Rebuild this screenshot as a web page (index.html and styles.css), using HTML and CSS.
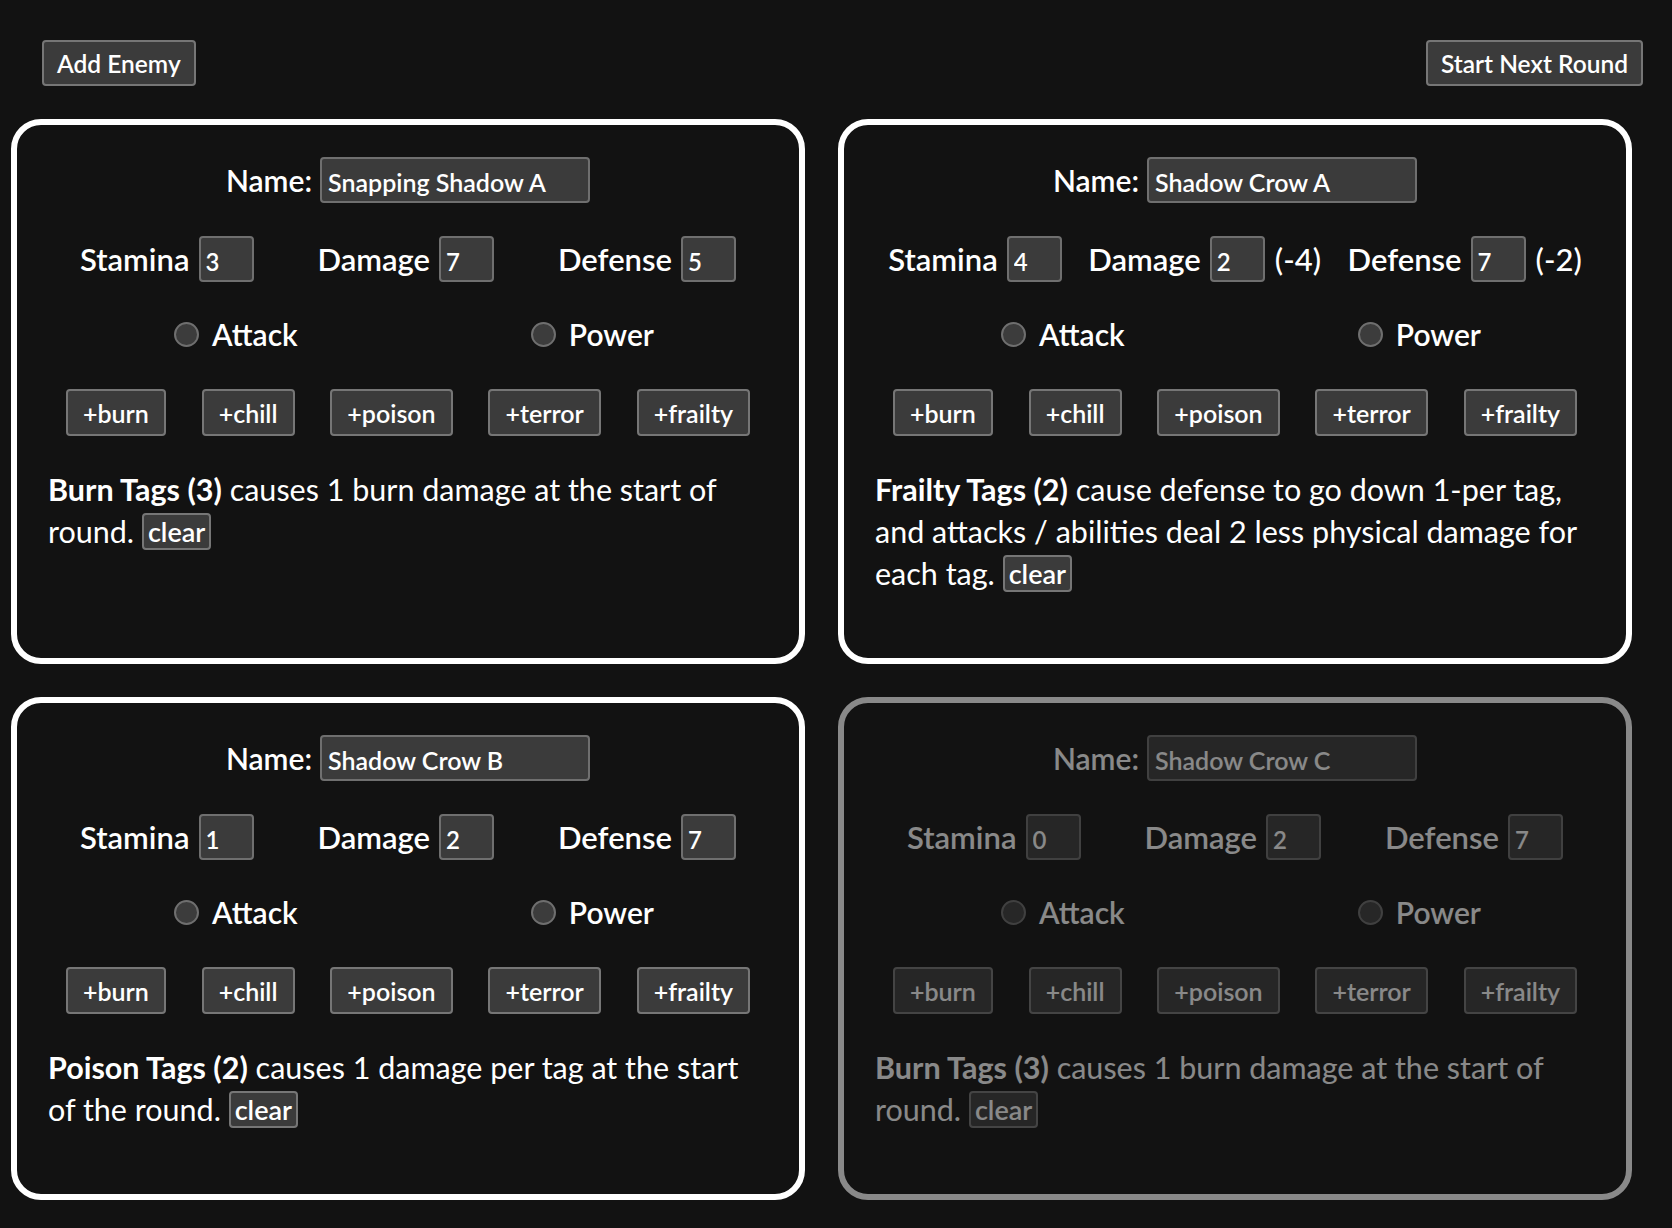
FILE: index.html
```html
<!DOCTYPE html>
<html lang="en">
<head>
<meta charset="utf-8">
<title>Enemy Tracker</title>
<link rel="stylesheet" href="styles.css">
</head>
<body>
<header class="toolbar">
  <button class="btn btn-main">Add Enemy</button>
  <button class="btn btn-main">Start Next Round</button>
</header>
<main class="grid">
  <section class="card">
    <div class="row name-row"><label class="lbl">Name:</label><input class="name-input" type="text" value="Snapping Shadow A"></div>
    <div class="row stats-row">
      <div class="stat"><span class="lbl">Stamina</span><input class="num" type="text" value="3"></div>
      <div class="stat"><span class="lbl">Damage</span><input class="num" type="text" value="7"></div>
      <div class="stat"><span class="lbl">Defense</span><input class="num" type="text" value="5"></div>
    </div>
    <div class="row radio-row">
      <label class="choice"><input type="radio" name="a1"><span class="lbl">Attack</span></label>
      <label class="choice"><input type="radio" name="a1"><span class="lbl">Power</span></label>
    </div>
    <div class="row tags-row">
      <button class="btn tag">+burn</button><button class="btn tag">+chill</button><button class="btn tag">+poison</button><button class="btn tag">+terror</button><button class="btn tag">+frailty</button>
    </div>
    <p class="desc"><b>Burn Tags (3)</b> causes 1 burn damage at the start of round. <button class="btn clear">clear</button></p>
  </section>

  <section class="card">
    <div class="row name-row"><label class="lbl">Name:</label><input class="name-input" type="text" value="Shadow Crow A"></div>
    <div class="row stats-row">
      <div class="stat"><span class="lbl">Stamina</span><input class="num" type="text" value="4"></div>
      <div class="stat"><span class="lbl">Damage</span><input class="num" type="text" value="2"><span class="lbl mod">(-4)</span></div>
      <div class="stat"><span class="lbl">Defense</span><input class="num" type="text" value="7"><span class="lbl mod">(-2)</span></div>
    </div>
    <div class="row radio-row">
      <label class="choice"><input type="radio" name="a2"><span class="lbl">Attack</span></label>
      <label class="choice"><input type="radio" name="a2"><span class="lbl">Power</span></label>
    </div>
    <div class="row tags-row">
      <button class="btn tag">+burn</button><button class="btn tag">+chill</button><button class="btn tag">+poison</button><button class="btn tag">+terror</button><button class="btn tag">+frailty</button>
    </div>
    <p class="desc"><b>Frailty Tags (2)</b> cause defense to go down 1-per tag, and attacks / abilities deal 2 less physical damage for each tag. <button class="btn clear">clear</button></p>
  </section>

  <section class="card">
    <div class="row name-row"><label class="lbl">Name:</label><input class="name-input" type="text" value="Shadow Crow B"></div>
    <div class="row stats-row">
      <div class="stat"><span class="lbl">Stamina</span><input class="num" type="text" value="1"></div>
      <div class="stat"><span class="lbl">Damage</span><input class="num" type="text" value="2"></div>
      <div class="stat"><span class="lbl">Defense</span><input class="num" type="text" value="7"></div>
    </div>
    <div class="row radio-row">
      <label class="choice"><input type="radio" name="a3"><span class="lbl">Attack</span></label>
      <label class="choice"><input type="radio" name="a3"><span class="lbl">Power</span></label>
    </div>
    <div class="row tags-row">
      <button class="btn tag">+burn</button><button class="btn tag">+chill</button><button class="btn tag">+poison</button><button class="btn tag">+terror</button><button class="btn tag">+frailty</button>
    </div>
    <p class="desc"><b>Poison Tags (2)</b> causes 1 damage per tag at the start of the round. <button class="btn clear">clear</button></p>
  </section>

  <section class="card card-dead">
    <div class="row name-row"><label class="lbl">Name:</label><input class="name-input" type="text" value="Shadow Crow C"></div>
    <div class="row stats-row">
      <div class="stat"><span class="lbl">Stamina</span><input class="num" type="text" value="0"></div>
      <div class="stat"><span class="lbl">Damage</span><input class="num" type="text" value="2"></div>
      <div class="stat"><span class="lbl">Defense</span><input class="num" type="text" value="7"></div>
    </div>
    <div class="row radio-row">
      <label class="choice"><input type="radio" name="a4"><span class="lbl">Attack</span></label>
      <label class="choice"><input type="radio" name="a4"><span class="lbl">Power</span></label>
    </div>
    <div class="row tags-row">
      <button class="btn tag">+burn</button><button class="btn tag">+chill</button><button class="btn tag">+poison</button><button class="btn tag">+terror</button><button class="btn tag">+frailty</button>
    </div>
    <p class="desc"><b>Burn Tags (3)</b> causes 1 burn damage at the start of round. <button class="btn clear">clear</button></p>
  </section>
</main>
</body>
</html>
```

FILE: styles.css
```css
* { box-sizing: border-box; }

html, body {
  margin: 0;
  background: #121212;
  color: #ffffff;
  font-family: Lato, "Liberation Sans", sans-serif;
}

.toolbar {
  display: flex;
  justify-content: space-between;
  align-items: center;
  padding: 40px 29px 0 42px;
  height: 86px;
}

.btn {
  font-family: inherit;
  color: #ffffff;
  background: #3b3b3b;
  border: 2px solid #767676;
  border-radius: 4px;
  font-weight: 600;
}

.btn-main {
  height: 46px;
  padding: 0 13px;
  font-size: 24.5px;
}

.grid {
  display: grid;
  grid-template-columns: repeat(2, 794px);
  column-gap: 33px;
  row-gap: 33px;
  margin: 33px 0 0 11px;
}

.card {
  border: 6px solid #ffffff;
  border-radius: 30px;
  padding: 32px 31px 64px;
}

.card-dead { opacity: 0.5; }

.row {
  display: flex;
  align-items: center;
}

.lbl {
  font-size: 30px;
  font-weight: 600;
}

.name-row {
  justify-content: center;
  height: 46px;
  gap: 8px;
}

.name-input, .num {
  font-family: inherit;
  font-size: 24px;
  font-weight: 600;
  color: #ffffff;
  background: #3b3b3b;
  border: 2px solid #6f6f6f;
  border-radius: 4px;
  height: 46px;
  padding: 4px 6px 0;
}

.name-input { width: 270px; font-size: 25px; }
.num { width: 55px; padding-left: 5px; }

.stats-row {
  justify-content: space-around;
  margin-top: 33px;
  height: 46px;
}

.stat {
  display: flex;
  align-items: center;
  gap: 9px;
}

.stat .lbl { font-size: 31px; }

.mod { margin-left: 1px; font-weight: 500; }

.radio-row {
  justify-content: space-around;
  margin-top: 29px;
  height: 46px;
  padding-left: 7px;
}

.choice {
  display: flex;
  align-items: center;
}

.choice input {
  appearance: none;
  -webkit-appearance: none;
  width: 25px;
  height: 25px;
  margin: 0 13px 0 5px;
  border-radius: 50%;
  background: #3c3c3c;
  border: 2px solid #6f6f6f;
}

.tags-row {
  justify-content: space-around;
  margin-top: 32px;
  height: 47px;
}

.tag {
  height: 47px;
  padding: 0 15px;
  font-size: 25px;
}

.desc {
  margin: 32px 8px 0 0;
  font-size: 30.5px;
  line-height: 42px;
}

.desc b { font-weight: 700; }

.clear {
  font-size: 27px;
  height: 37px;
  padding: 0 4px;
  vertical-align: 1px;
}
```
